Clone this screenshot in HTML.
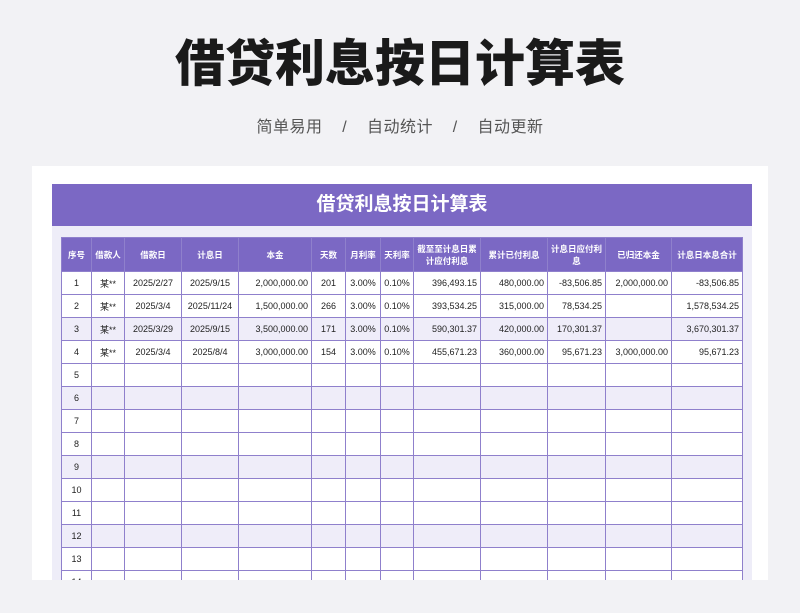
<!DOCTYPE html>
<html><head><meta charset="utf-8"><style>
*{margin:0;padding:0;box-sizing:border-box}
html,body{width:800px;height:613px;overflow:hidden}
body{background:#f2f2f5;font-family:"Liberation Sans","Noto Sans CJK SC",sans-serif;position:relative}
h1{position:absolute;top:30px;left:0;width:800px;text-align:center;font-size:50px;font-weight:900;color:#1a1a1a;letter-spacing:0;line-height:68px}
.sub{position:absolute;top:113px;left:0;width:800px;text-align:center;font-size:16px;color:#555;letter-spacing:0.5px}
.card{position:absolute;left:32px;top:166px;width:736px;height:414px;background:#fff;overflow:hidden}
.band{position:absolute;left:20px;top:18px;width:700px;height:42px;background:#7b68c4;color:#fff;font-size:19px;font-weight:bold;text-align:center;line-height:42px}
.lav{position:absolute;left:20px;top:60px;width:700px;height:400px;background:#eeedf8}
table{position:absolute;left:29px;top:71px;border-collapse:collapse;table-layout:fixed;font-size:9px;color:#222}
td,th{border:1px solid #8f80cc;height:23px;padding:0 3px;white-space:nowrap;overflow:hidden}
th{background:#7b68c4;color:#fff;font-weight:bold;height:34px;font-size:8.5px;line-height:12px;white-space:normal;text-align:center}
td{background:#fff;text-align:center}
tr.s td{background:#efedf9}
td.r{text-align:right}
</style></head><body>
<h1>借贷利息按日计算表</h1>
<div class="sub">简单易用 &nbsp;&nbsp;&nbsp;/&nbsp;&nbsp;&nbsp; 自动统计 &nbsp;&nbsp;&nbsp;/&nbsp;&nbsp;&nbsp; 自动更新</div>
<div class="card">
<div class="band">借贷利息按日计算表</div>
<div class="lav"></div>
<table>
<colgroup><col style="width:30px"><col style="width:33px"><col style="width:57px"><col style="width:57px"><col style="width:73px"><col style="width:34px"><col style="width:35px"><col style="width:33px"><col style="width:67px"><col style="width:67px"><col style="width:58px"><col style="width:66px"><col style="width:71px"></colgroup>
<tr><th>序号</th><th>借款人</th><th>借款日</th><th>计息日</th><th>本金</th><th>天数</th><th>月利率</th><th>天利率</th><th>截至至计息日累计应付利息</th><th>累计已付利息</th><th>计息日应付利息</th><th>已归还本金</th><th>计息日本息合计</th></tr>
<tr><td>1</td><td>某**</td><td>2025/2/27</td><td>2025/9/15</td><td class="r">2,000,000.00</td><td>201</td><td>3.00%</td><td>0.10%</td><td class="r">396,493.15</td><td class="r">480,000.00</td><td class="r">-83,506.85</td><td class="r">2,000,000.00</td><td class="r">-83,506.85</td></tr>
<tr><td>2</td><td>某**</td><td>2025/3/4</td><td>2025/11/24</td><td class="r">1,500,000.00</td><td>266</td><td>3.00%</td><td>0.10%</td><td class="r">393,534.25</td><td class="r">315,000.00</td><td class="r">78,534.25</td><td class="r"></td><td class="r">1,578,534.25</td></tr>
<tr class="s"><td>3</td><td>某**</td><td>2025/3/29</td><td>2025/9/15</td><td class="r">3,500,000.00</td><td>171</td><td>3.00%</td><td>0.10%</td><td class="r">590,301.37</td><td class="r">420,000.00</td><td class="r">170,301.37</td><td class="r"></td><td class="r">3,670,301.37</td></tr>
<tr><td>4</td><td>某**</td><td>2025/3/4</td><td>2025/8/4</td><td class="r">3,000,000.00</td><td>154</td><td>3.00%</td><td>0.10%</td><td class="r">455,671.23</td><td class="r">360,000.00</td><td class="r">95,671.23</td><td class="r">3,000,000.00</td><td class="r">95,671.23</td></tr>
<tr><td>5</td><td></td><td></td><td></td><td></td><td></td><td></td><td></td><td></td><td></td><td></td><td></td><td></td></tr>
<tr class="s"><td>6</td><td></td><td></td><td></td><td></td><td></td><td></td><td></td><td></td><td></td><td></td><td></td><td></td></tr>
<tr><td>7</td><td></td><td></td><td></td><td></td><td></td><td></td><td></td><td></td><td></td><td></td><td></td><td></td></tr>
<tr><td>8</td><td></td><td></td><td></td><td></td><td></td><td></td><td></td><td></td><td></td><td></td><td></td><td></td></tr>
<tr class="s"><td>9</td><td></td><td></td><td></td><td></td><td></td><td></td><td></td><td></td><td></td><td></td><td></td><td></td></tr>
<tr><td>10</td><td></td><td></td><td></td><td></td><td></td><td></td><td></td><td></td><td></td><td></td><td></td><td></td></tr>
<tr><td>11</td><td></td><td></td><td></td><td></td><td></td><td></td><td></td><td></td><td></td><td></td><td></td><td></td></tr>
<tr class="s"><td>12</td><td></td><td></td><td></td><td></td><td></td><td></td><td></td><td></td><td></td><td></td><td></td><td></td></tr>
<tr><td>13</td><td></td><td></td><td></td><td></td><td></td><td></td><td></td><td></td><td></td><td></td><td></td><td></td></tr>
<tr><td>14</td><td></td><td></td><td></td><td></td><td></td><td></td><td></td><td></td><td></td><td></td><td></td><td></td></tr>
</table>
</div>
</body></html>
